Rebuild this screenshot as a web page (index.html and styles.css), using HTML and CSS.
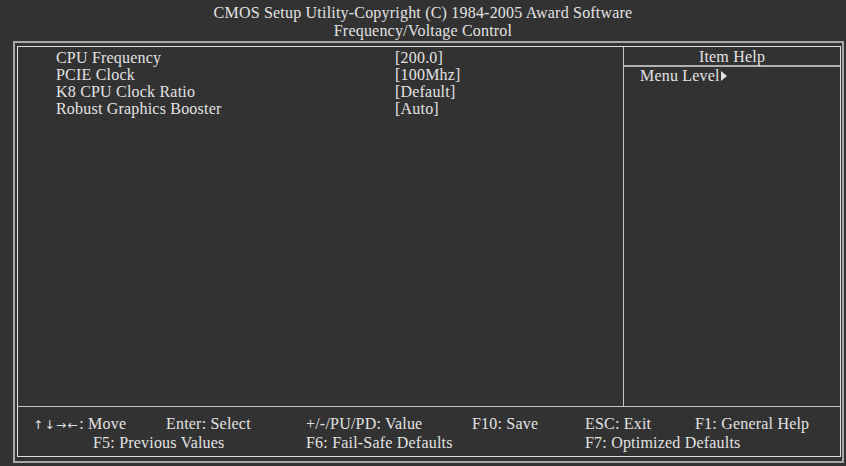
FILE: index.html
```html
<!DOCTYPE html>
<html lang="en">
<head>
    <meta charset="UTF-8">
    <title>CMOS Setup Utility - Frequency/Voltage Control</title>
    <link rel="stylesheet" href="styles.css">
</head>
<body>

    <div class="title">
        <div>CMOS Setup Utility-Copyright (C) 1984-2005 Award Software</div>
        <div>Frequency/Voltage Control</div>
    </div>

    <div class="frame">
        <div class="inner">
            <div class="main">
                <div class="items">
                    <div class="row"><span>CPU Frequency</span><span>[200.0]</span></div>
                    <div class="row"><span>PCIE Clock</span><span>[100Mhz]</span></div>
                    <div class="row"><span>K8 CPU Clock Ratio</span><span>[Default]</span></div>
                    <div class="row"><span>Robust Graphics Booster</span><span>[Auto]</span></div>
                </div>
                <div class="help">
                    <div class="help-head">Item Help</div>
                    <div class="help-body">Menu Level<span class="tri"></span></div>
                </div>
            </div>
            <div class="keys">
                <span><span class="arrows">&#8593;&#8595;&#8594;&#8592;</span>: Move</span>
                <span>Enter: Select</span>
                <span>+/-/PU/PD: Value</span>
                <span>F10: Save</span>
                <span>ESC: Exit</span>
                <span>F1: General Help</span>
                <span class="f5">F5: Previous Values</span>
                <span class="f6">F6: Fail-Safe Defaults</span>
                <span class="f7">F7: Optimized Defaults</span>
            </div>
        </div>
    </div>

</body>
</html>
```

FILE: styles.css
```css
body {
    margin: 0;
    width: 846px;
    height: 466px;
    background-color: #323232;
    color: #e2e2e2;
    font-family: "Liberation Serif", "Times New Roman", serif;
    font-size: 16px;
    letter-spacing: 0.2px;
    overflow: hidden;
}
.title {
    padding-top: 4px;
    text-align: center;
    line-height: 18px;
}
.frame {
    margin: 1px 2px 0 13px;
    padding: 3px 1px 4px 2px;
    border: 2px solid #a8a8a8;
}
.inner {
    border: 1px solid #dedede;
}
.main {
    display: grid;
    grid-template-columns: 605px 1fr;
    height: 359px;
}
.items {
    padding: 2px 0 0 38px;
}
.row {
    display: grid;
    grid-template-columns: 339px 1fr;
    line-height: 17px;
}
.help {
    border-left: 1px solid #c4c4c4;
}
.help-head {
    text-align: center;
    line-height: 17px;
    padding-top: 1px;
    border-bottom: 2px solid #b0b0b0;
}
.help-body {
    padding-left: 16px;
    line-height: 17px;
}
.tri {
    display: inline-block;
    width: 0;
    height: 0;
    border-left: 6px solid #e2e2e2;
    border-top: 5px solid transparent;
    border-bottom: 5px solid transparent;
    margin-left: 1px;
}
.keys {
    display: grid;
    grid-template-columns: 133px 140px 166px 113px 110px 1fr;
    padding: 8px 0 4px 15px;
    line-height: 18px;
    border-top: 1px solid #c4c4c4;
}
.arrows {
    font-family: "DejaVu Sans", sans-serif;
    font-size: 12px;
    letter-spacing: 1.5px;
}
.f5 {
    grid-column: 1 / 3;
    padding-left: 60px;
}
.f6 {
    grid-column: 3 / 5;
}
.f7 {
    grid-column: 5 / 7;
}
```
